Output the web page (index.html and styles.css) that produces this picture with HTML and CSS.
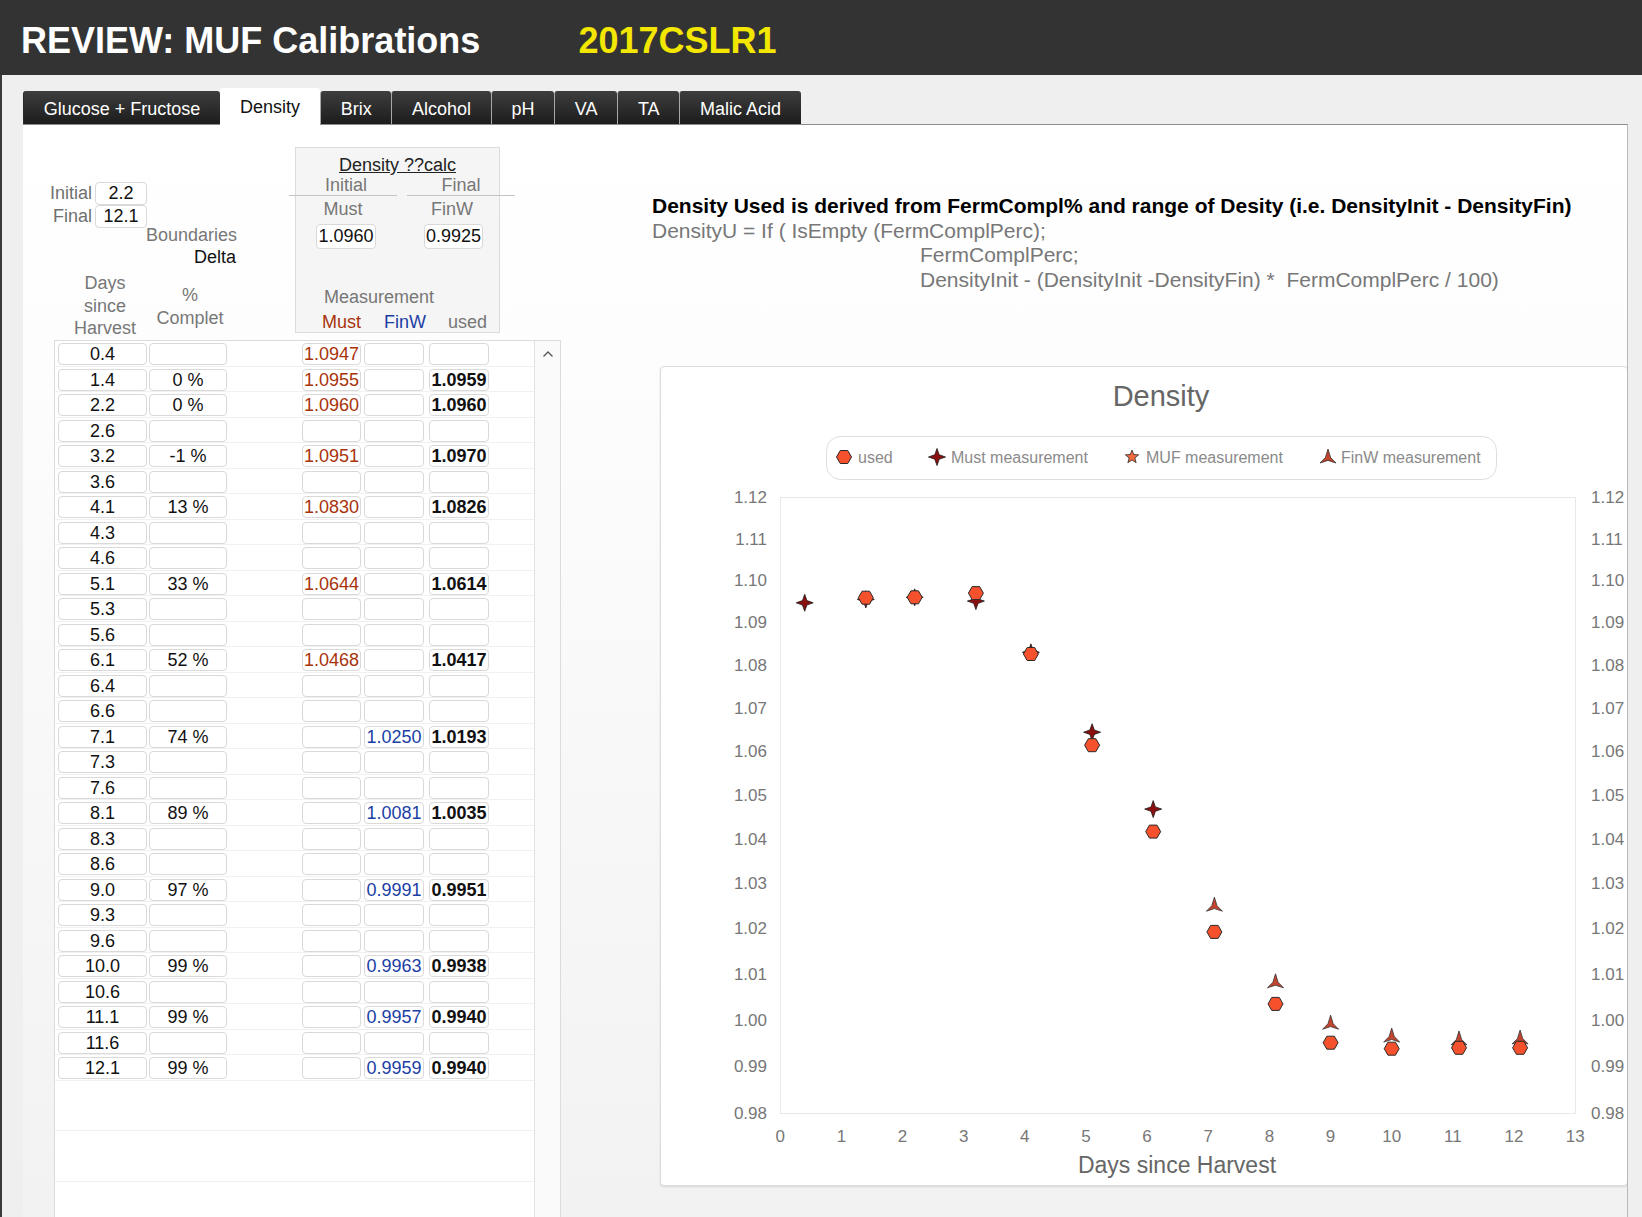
FILE: index.html
```html
<!DOCTYPE html>
<html>
<head>
<meta charset="utf-8">
<title>REVIEW: MUF Calibrations</title>
<link rel="stylesheet" href="styles.css">
</head>
<body>
<div class="topbar">
  <h1 class="title">REVIEW: MUF Calibrations</h1>
  <span class="code">2017CSLR1</span>
</div>
<div class="main">
  <nav class="tabs">
    <span class="tab first">Glucose + Fructose</span>
    <span class="tab active">Density</span>
    <span class="tab">Brix</span>
    <span class="tab">Alcohol</span>
    <span class="tab">pH</span>
    <span class="tab">VA</span>
    <span class="tab">TA</span>
    <span class="tab">Malic Acid</span>
  </nav>
  <section class="panel">
    <div class="ptop">
      <div class="top">
        <div class="colA">
          <div class="bounds">
            <div class="brow"><span class="blabel">Initial</span><span class="bbox">2.2</span></div>
            <div class="brow"><span class="blabel">Final</span><span class="bbox">12.1</span></div>
          </div>
          <div class="bound-lbl"><div class="gray">Boundaries</div><div>Delta</div></div>
          <div class="colheads">
            <div class="ch-days">Days<br>since<br>Harvest</div>
            <div class="ch-pct">%<br>Complet</div>
          </div>
        </div>
        <div class="calc">
          <div class="calc-title">Density ??calc</div>
          <div class="calc-if"><span class="if-h if-l">Initial</span><span class="if-h">Final</span></div>
          <div class="calc-sub"><span class="cs">Must</span><span class="cs cs2">FinW</span></div>
          <div class="calc-in"><span class="cbox">1.0960</span><span class="cbox cbox2">0.9925</span></div>
          <div class="calc-meas">Measurement</div>
          <div class="calc-cols"><span class="cc must">Must</span><span class="cc finw">FinW</span><span class="cc">used</span></div>
        </div>
      </div>
      <div class="formula">
        <div class="f-bold">Density Used is derived from FermCompl% and range of Desity (i.e. DensityInit - DensityFin)</div>
        <div>DensityU = If ( IsEmpty (FermComplPerc);</div>
        <div class="f-ind">FermComplPerc;</div>
        <div class="f-ind">DensityInit - (DensityInit -DensityFin) * &nbsp;FermComplPerc / 100)</div>
      </div>
    </div>
    <div class="pbottom">
      <div class="tbox">
        <div class="rows">
          <div class="row"><span class="cell c-day">0.4</span><span class="cell c-pct"></span><span class="cell c-must">1.0947</span><span class="cell c-finw"></span><span class="cell c-used"></span></div>
          <div class="row"><span class="cell c-day">1.4</span><span class="cell c-pct">0 %</span><span class="cell c-must">1.0955</span><span class="cell c-finw"></span><span class="cell c-used">1.0959</span></div>
          <div class="row"><span class="cell c-day">2.2</span><span class="cell c-pct">0 %</span><span class="cell c-must">1.0960</span><span class="cell c-finw"></span><span class="cell c-used">1.0960</span></div>
          <div class="row"><span class="cell c-day">2.6</span><span class="cell c-pct"></span><span class="cell c-must"></span><span class="cell c-finw"></span><span class="cell c-used"></span></div>
          <div class="row"><span class="cell c-day">3.2</span><span class="cell c-pct">-1 %</span><span class="cell c-must">1.0951</span><span class="cell c-finw"></span><span class="cell c-used">1.0970</span></div>
          <div class="row"><span class="cell c-day">3.6</span><span class="cell c-pct"></span><span class="cell c-must"></span><span class="cell c-finw"></span><span class="cell c-used"></span></div>
          <div class="row"><span class="cell c-day">4.1</span><span class="cell c-pct">13 %</span><span class="cell c-must">1.0830</span><span class="cell c-finw"></span><span class="cell c-used">1.0826</span></div>
          <div class="row"><span class="cell c-day">4.3</span><span class="cell c-pct"></span><span class="cell c-must"></span><span class="cell c-finw"></span><span class="cell c-used"></span></div>
          <div class="row"><span class="cell c-day">4.6</span><span class="cell c-pct"></span><span class="cell c-must"></span><span class="cell c-finw"></span><span class="cell c-used"></span></div>
          <div class="row"><span class="cell c-day">5.1</span><span class="cell c-pct">33 %</span><span class="cell c-must">1.0644</span><span class="cell c-finw"></span><span class="cell c-used">1.0614</span></div>
          <div class="row"><span class="cell c-day">5.3</span><span class="cell c-pct"></span><span class="cell c-must"></span><span class="cell c-finw"></span><span class="cell c-used"></span></div>
          <div class="row"><span class="cell c-day">5.6</span><span class="cell c-pct"></span><span class="cell c-must"></span><span class="cell c-finw"></span><span class="cell c-used"></span></div>
          <div class="row"><span class="cell c-day">6.1</span><span class="cell c-pct">52 %</span><span class="cell c-must">1.0468</span><span class="cell c-finw"></span><span class="cell c-used">1.0417</span></div>
          <div class="row"><span class="cell c-day">6.4</span><span class="cell c-pct"></span><span class="cell c-must"></span><span class="cell c-finw"></span><span class="cell c-used"></span></div>
          <div class="row"><span class="cell c-day">6.6</span><span class="cell c-pct"></span><span class="cell c-must"></span><span class="cell c-finw"></span><span class="cell c-used"></span></div>
          <div class="row"><span class="cell c-day">7.1</span><span class="cell c-pct">74 %</span><span class="cell c-must"></span><span class="cell c-finw">1.0250</span><span class="cell c-used">1.0193</span></div>
          <div class="row"><span class="cell c-day">7.3</span><span class="cell c-pct"></span><span class="cell c-must"></span><span class="cell c-finw"></span><span class="cell c-used"></span></div>
          <div class="row"><span class="cell c-day">7.6</span><span class="cell c-pct"></span><span class="cell c-must"></span><span class="cell c-finw"></span><span class="cell c-used"></span></div>
          <div class="row"><span class="cell c-day">8.1</span><span class="cell c-pct">89 %</span><span class="cell c-must"></span><span class="cell c-finw">1.0081</span><span class="cell c-used">1.0035</span></div>
          <div class="row"><span class="cell c-day">8.3</span><span class="cell c-pct"></span><span class="cell c-must"></span><span class="cell c-finw"></span><span class="cell c-used"></span></div>
          <div class="row"><span class="cell c-day">8.6</span><span class="cell c-pct"></span><span class="cell c-must"></span><span class="cell c-finw"></span><span class="cell c-used"></span></div>
          <div class="row"><span class="cell c-day">9.0</span><span class="cell c-pct">97 %</span><span class="cell c-must"></span><span class="cell c-finw">0.9991</span><span class="cell c-used">0.9951</span></div>
          <div class="row"><span class="cell c-day">9.3</span><span class="cell c-pct"></span><span class="cell c-must"></span><span class="cell c-finw"></span><span class="cell c-used"></span></div>
          <div class="row"><span class="cell c-day">9.6</span><span class="cell c-pct"></span><span class="cell c-must"></span><span class="cell c-finw"></span><span class="cell c-used"></span></div>
          <div class="row"><span class="cell c-day">10.0</span><span class="cell c-pct">99 %</span><span class="cell c-must"></span><span class="cell c-finw">0.9963</span><span class="cell c-used">0.9938</span></div>
          <div class="row"><span class="cell c-day">10.6</span><span class="cell c-pct"></span><span class="cell c-must"></span><span class="cell c-finw"></span><span class="cell c-used"></span></div>
          <div class="row"><span class="cell c-day">11.1</span><span class="cell c-pct">99 %</span><span class="cell c-must"></span><span class="cell c-finw">0.9957</span><span class="cell c-used">0.9940</span></div>
          <div class="row"><span class="cell c-day">11.6</span><span class="cell c-pct"></span><span class="cell c-must"></span><span class="cell c-finw"></span><span class="cell c-used"></span></div>
          <div class="row"><span class="cell c-day">12.1</span><span class="cell c-pct">99 %</span><span class="cell c-must"></span><span class="cell c-finw">0.9959</span><span class="cell c-used">0.9940</span></div>
          <div class="filler"></div>
          <div class="filler"></div>
          <div class="filler"></div>
        </div>
        <div class="scroll">
          <svg class="chev" width="12" height="8" viewBox="0 0 12 8"><path d="M1.5 6.5 L6 2 L10.5 6.5" fill="none" stroke="#555" stroke-width="1.3"/></svg>
        </div>
      </div>
      <div class="card">
        <svg class="chart" width="968" height="820" viewBox="0 0 968 820">
          <defs>
            <path id="hex" d="M-7.5 0 L-3.75 -6.5 L3.75 -6.5 L7.5 0 L3.75 6.5 L-3.75 6.5Z" fill="#f4512c" stroke="#2a2a2a" stroke-width="1"/>
            <path id="star4" d="M0 -8.5 L2.2 -2.2 L8.5 0 L2.2 2.2 L0 8.5 L-2.2 2.2 L-8.5 0 L-2.2 -2.2Z" fill="#8c0f0f" stroke="#1a1a1a" stroke-width="0.8"/>
            <path id="star5" d="M0 -7 L1.76 -2.43 L6.66 -2.16 L2.85 0.93 L4.11 5.66 L0 3 L-4.11 5.66 L-2.85 0.93 L-6.66 -2.16 L-1.76 -2.43Z" fill="#f26a3e" stroke="#2a2a2a" stroke-width="0.8"/>
            <path id="tri" d="M0 -9 L2.6 -0.5 L8 5 L0 2.4 L-8 5 L-2.6 -0.5Z" fill="#c2432e" stroke="#333" stroke-width="0.8"/>
          </defs>
          <text class="ctitle" x="501" y="40" text-anchor="middle">Density</text>
          <rect x="166.5" y="70.5" width="670" height="43" rx="14" fill="#fff" stroke="#dedede"/>
          <use href="#hex" x="184" y="91"/>
          <text class="leg" x="198" y="97">used</text>
          <use href="#star4" x="277" y="91"/>
          <text class="leg" x="291" y="97">Must measurement</text>
          <use href="#star5" x="472" y="91"/>
          <text class="leg" x="486" y="97">MUF measurement</text>
          <use href="#tri" x="668" y="92"/>
          <text class="leg" x="681" y="97">FinW measurement</text>

          <rect x="120.5" y="131.5" width="795" height="616" fill="none" stroke="#e8e8e8"/>

          <g class="ylab" text-anchor="end">
            <text x="107" y="137">1.12</text>
            <text x="107" y="178.5">1.11</text>
            <text x="107" y="220">1.10</text>
            <text x="107" y="262">1.09</text>
            <text x="107" y="304.5">1.08</text>
            <text x="107" y="347.5">1.07</text>
            <text x="107" y="391">1.06</text>
            <text x="107" y="434.5">1.05</text>
            <text x="107" y="478.5">1.04</text>
            <text x="107" y="523">1.03</text>
            <text x="107" y="568">1.02</text>
            <text x="107" y="613.5">1.01</text>
            <text x="107" y="659.5">1.00</text>
            <text x="107" y="706">0.99</text>
            <text x="107" y="752.5">0.98</text>
          </g>
          <g class="ylab" text-anchor="start">
            <text x="931" y="137">1.12</text>
            <text x="931" y="178.5">1.11</text>
            <text x="931" y="220">1.10</text>
            <text x="931" y="262">1.09</text>
            <text x="931" y="304.5">1.08</text>
            <text x="931" y="347.5">1.07</text>
            <text x="931" y="391">1.06</text>
            <text x="931" y="434.5">1.05</text>
            <text x="931" y="478.5">1.04</text>
            <text x="931" y="523">1.03</text>
            <text x="931" y="568">1.02</text>
            <text x="931" y="613.5">1.01</text>
            <text x="931" y="659.5">1.00</text>
            <text x="931" y="706">0.99</text>
            <text x="931" y="752.5">0.98</text>
          </g>
          <g class="ylab" text-anchor="middle">
            <text x="120.2" y="776">0</text>
            <text x="181.4" y="776">1</text>
            <text x="242.5" y="776">2</text>
            <text x="303.7" y="776">3</text>
            <text x="364.8" y="776">4</text>
            <text x="426" y="776">5</text>
            <text x="487.1" y="776">6</text>
            <text x="548.3" y="776">7</text>
            <text x="609.4" y="776">8</text>
            <text x="670.6" y="776">9</text>
            <text x="731.7" y="776">10</text>
            <text x="792.9" y="776">11</text>
            <text x="854" y="776">12</text>
            <text x="915.2" y="776">13</text>
          </g>
          <text class="xtitle" x="517" y="807" text-anchor="middle">Days since Harvest</text>

          <g>
            <use href="#star4" x="144.7" y="236.8"/>
            <use href="#star4" x="205.8" y="233.4"/>
            <use href="#star4" x="254.7" y="231.3"/>
            <use href="#star4" x="315.9" y="235.1"/>
            <use href="#star4" x="370.9" y="286.3"/>
            <use href="#star4" x="432.1" y="366.2"/>
            <use href="#star4" x="493.2" y="443.1"/>
          </g>
          <g>
            <use href="#tri" x="554.4" y="540.2"/>
            <use href="#tri" x="615.5" y="616.8"/>
            <use href="#tri" x="670.6" y="658.2"/>
            <use href="#tri" x="731.7" y="671.1"/>
            <use href="#tri" x="799" y="673.9"/>
            <use href="#tri" x="860.1" y="673"/>
          </g>
          <g>
            <use href="#hex" x="205.8" y="231.7"/>
            <use href="#hex" x="254.7" y="231.3"/>
            <use href="#hex" x="315.9" y="227.1"/>
            <use href="#hex" x="370.9" y="288"/>
            <use href="#hex" x="432.1" y="379.2"/>
            <use href="#hex" x="493.2" y="465.6"/>
            <use href="#hex" x="554.4" y="565.9"/>
            <use href="#hex" x="615.5" y="637.9"/>
            <use href="#hex" x="670.6" y="676.7"/>
            <use href="#hex" x="731.7" y="682.7"/>
            <use href="#hex" x="799" y="681.8"/>
            <use href="#hex" x="860.1" y="681.8"/>
          </g>
        </svg>
      </div>
    </div>
  </section>
</div>
</body>
</html>
```

FILE: styles.css
```css
html, body {
  margin: 0;
  padding: 0;
}
body {
  width: 1642px;
  height: 1217px;
  overflow: hidden;
  background: #efefef;
  font-family: "Liberation Sans", Arial, sans-serif;
  font-size: 18px;
  color: #111;
}
.topbar {
  height: 75px;
  box-sizing: border-box;
  padding: 6px 0 0 21px;
  background: #333333;
  display: flex;
  align-items: center;
  gap: 98px;
}
.title {
  margin: 0;
  font-size: 36px;
  font-weight: bold;
  color: #ffffff;
  line-height: 40px;
}
.code {
  font-size: 36px;
  font-weight: bold;
  color: #f3e600;
  line-height: 40px;
}
.main {
  height: 1142px;
  box-shadow: inset 2px 0 #3a3a3a;
}
.tabs {
  height: 49px;
  display: flex;
  align-items: flex-end;
  padding-left: 23px;
}
.tab {
  height: 33px;
  box-sizing: border-box;
  padding: 4px 19.7px 0;
  line-height: 29px;
  font-size: 18px;
  color: #fff;
  background: linear-gradient(#3e3e3e, #1c1c1c);
  border-left: 1px solid #a8a8a8;
  border-radius: 3px 3px 0 0;
}
.tab.first {
  border-left-color: #2a2a2a;
}
.tab.active {
  height: 37px;
  padding: 2px 20px 0;
  line-height: 34px;
  border-left: none;
  background: #ffffff;
  color: #111;
  margin-bottom: -1px;
  position: relative;
}
.panel {
  margin-left: 23px;
  width: 1605px;
  height: 1093px;
  box-sizing: border-box;
  border-top: 1px solid #8c8c8c;
  border-right: 1px solid #b8b8b8;
  background: linear-gradient(#ffffff 0, #fdfdfd 240px, #f2f2f2 100%);
  display: flex;
  flex-direction: column;
  overflow: hidden;
}
.ptop {
  height: 215px;
  display: flex;
  flex-shrink: 0;
}
.top {
  width: 538px;
  display: flex;
}
.colA {
  width: 272px;
}
.bounds {
  margin-top: 57px;
  width: 124px;
}
.brow {
  display: flex;
  justify-content: flex-end;
  align-items: center;
  gap: 3px;
  height: 23px;
}
.blabel {
  color: #6f6f6f;
}
.bbox {
  width: 52px;
  height: 23px;
  box-sizing: border-box;
  border: 1px solid #d9d9d9;
  border-radius: 4px;
  background: #fff;
  text-align: center;
  line-height: 21px;
  color: #111;
}
.bound-lbl {
  margin: -4px 0 0 123px;
  width: 90px;
  text-align: right;
  line-height: 22px;
  color: #111;
}
.gray {
  color: #777;
}
.colheads {
  display: flex;
  margin-top: 4px;
  color: #777;
}
.ch-days {
  width: 90px;
  margin-left: 37px;
  text-align: center;
  line-height: 22.5px;
}
.ch-pct {
  width: 80px;
  margin-top: 12px;
  text-align: center;
  line-height: 22.5px;
}
.calc {
  width: 205px;
  height: 186px;
  margin-top: 22px;
  box-sizing: border-box;
  background: #f5f5f5;
  border: 1px solid #dcdcdc;
  color: #777;
}
.calc-title {
  text-align: center;
  padding-top: 6px;
  line-height: 22px;
  color: #222;
  text-decoration: underline;
}
.calc-if {
  display: flex;
  gap: 10px;
  margin: -1px -16px 0 -7px;
}
.if-h {
  width: 108px;
  border-bottom: 1px solid #c4c4c4;
  line-height: 20px;
  text-align: center;
}
.if-l {
  padding-left: 6px;
  box-sizing: border-box;
}
.calc-sub {
  display: flex;
  margin-top: 2px;
  line-height: 22px;
}
.cs {
  width: 98px;
  text-align: center;
}
.cs2 {
  margin-left: 15px;
}
.calc-in {
  display: flex;
  margin-top: 4px;
  padding-left: 20px;
  gap: 48px;
}
.cbox {
  width: 60px;
  height: 25px;
  box-sizing: border-box;
  border: 1px solid #d9d9d9;
  border-radius: 4px;
  background: #fff;
  color: #111;
  text-align: center;
  line-height: 23px;
}
.cbox2 {
  width: 59px;
}
.calc-meas {
  margin-top: 37px;
  padding-left: 28px;
  line-height: 22px;
}
.calc-cols {
  display: flex;
  margin-top: 3px;
  padding-left: 6px;
  line-height: 22px;
}
.cc {
  width: 61px;
  text-align: right;
}
.cc.must {
  width: 59px;
  color: #a8330b;
}
.cc.finw {
  width: 65px;
  color: #1b3ea5;
}
.formula {
  margin: 69px 0 0 91px;
  font-size: 21px;
  line-height: 24.5px;
  color: #777;
  white-space: nowrap;
}
.f-bold {
  color: #000;
  font-weight: bold;
}
.f-ind {
  padding-left: 268px;
}
.pbottom {
  flex: 1;
  display: flex;
}
.tbox {
  margin-left: 31px;
  width: 507px;
  flex-shrink: 0;
  box-sizing: border-box;
  border: 1px solid #dcdcdc;
  border-bottom: none;
  background: #fff;
  display: flex;
}
.rows {
  width: 480px;
}
.row {
  display: flex;
  height: 25.5px;
  box-sizing: border-box;
  padding: 2px 0 0 3px;
  border-bottom: 1px solid #f1f1f1;
}
.filler {
  height: 50.5px;
  box-sizing: border-box;
  border-bottom: 1px solid #f1f1f1;
}
.cell {
  height: 22px;
  box-sizing: border-box;
  border: 1px solid #d9d9d9;
  border-radius: 4px;
  background: #fff;
  text-align: center;
  line-height: 20px;
  font-size: 18px;
  color: #111;
}
.c-day {
  width: 89px;
}
.c-pct {
  width: 78px;
  margin-left: 2px;
}
.c-must {
  width: 59px;
  margin-left: 75px;
  color: #a8330b;
}
.c-finw {
  width: 60px;
  margin-left: 3px;
  color: #1b3ea5;
}
.c-used {
  width: 60px;
  margin-left: 5px;
  font-weight: bold;
}
.scroll {
  width: 25px;
  border-left: 1px solid #e2e2e2;
  background: #fafafa;
  display: flex;
  justify-content: center;
}
.chev {
  margin-top: 9px;
}
.card {
  margin: 26px 0 0 99px;
  width: 968px;
  height: 820px;
  flex-shrink: 0;
  box-sizing: border-box;
  border: 1px solid #dcdcdc;
  border-radius: 4px;
  background: #fff;
  box-shadow: 0 1px 2px rgba(0, 0, 0, 0.12);
}
.chart {
  display: block;
  margin: -1px;
  font-family: "Liberation Sans", Arial, sans-serif;
}
.ctitle {
  font-size: 29px;
  fill: #666;
}
.leg {
  font-size: 16px;
  fill: #8a8a8a;
}
.ylab text {
  font-size: 17px;
  fill: #777;
}
.xtitle {
  font-size: 23px;
  fill: #666;
}
```
